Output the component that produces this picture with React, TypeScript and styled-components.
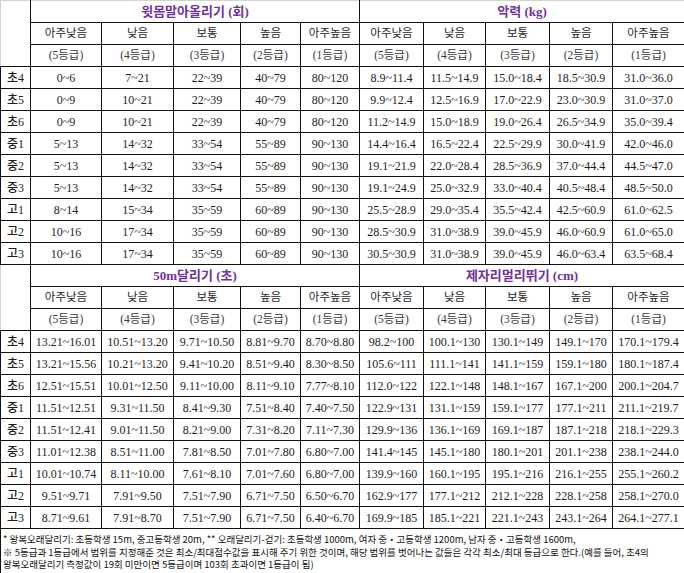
import React from "react";
import styled, { createGlobalStyle } from "styled-components";

const Global = createGlobalStyle`
  html, body { margin: 0; padding: 0; background: #fff; }
  body { font-family: "Liberation Serif", "Noto Sans CJK KR", serif; }
`;

const Table = styled.table`
  border-collapse: collapse;
  table-layout: fixed;
  width: 684px;
  background: #fff;
  color: #1e1e1e;
`;

const Cell = styled.td<{ $kind?: "data" | "label" | "level" | "grade" }>`
  border: 1px solid #111;
  padding: 0;
  height: 21px;
  text-align: center;
  vertical-align: middle;
  white-space: nowrap;
  overflow: hidden;
  font-family: "Liberation Serif", "Noto Sans CJK KR", serif;
  font-size: ${(p) => (p.$kind === "level" || p.$kind === "grade" ? "11.5px" : "12px")};
  color: ${(p) => (p.$kind === "grade" ? "#3a3a3a" : "#1e1e1e")};
  font-weight: ${(p) => (p.$kind === "label" ? 500 : 400)};
  line-height: 1;
`;

const Corner = styled.td`
  border: 1px solid #111;
  border-top-color: #d4d4d4;
  border-left-color: #d4d4d4;
  padding: 0;
`;

const Title = styled.td`
  border: 1px solid #111;
  padding: 0;
  height: 21px;
  text-align: center;
  vertical-align: middle;
  font-family: "Liberation Serif", "Noto Sans CJK KR", serif;
  font-size: 13px;
  font-weight: 600;
  color: #7030a0;
  line-height: 1;
`;

const TopTitle = styled(Title)`
  border-top-color: #d4d4d4;
`;

const Notes = styled.td`
  border: 1px solid #111;
  padding: 4px 1px 2px 2px;
  text-align: left;
  vertical-align: top;
  font-family: "Noto Sans CJK KR", sans-serif;
  font-size: 9.5px;
  line-height: 12.5px;
  color: #111;
  white-space: normal;
  word-break: keep-all;
`;

const widths = [30, 71, 72, 67, 60, 59, 64, 62, 64, 63, 72];
const levels = ["아주낮음", "낮음", "보통", "높음", "아주높음"];
const grades = ["(5등급)", "(4등급)", "(3등급)", "(2등급)", "(1등급)"];
const labels = ["초4", "초5", "초6", "중1", "중2", "중3", "고1", "고2", "고3"];

const top: string[][] = [
  ["0~6", "7~21", "22~39", "40~79", "80~120", "8.9~11.4", "11.5~14.9", "15.0~18.4", "18.5~30.9", "31.0~36.0"],
  ["0~9", "10~21", "22~39", "40~79", "80~120", "9.9~12.4", "12.5~16.9", "17.0~22.9", "23.0~30.9", "31.0~37.0"],
  ["0~9", "10~21", "22~39", "40~79", "80~120", "11.2~14.9", "15.0~18.9", "19.0~26.4", "26.5~34.9", "35.0~39.4"],
  ["5~13", "14~32", "33~54", "55~89", "90~130", "14.4~16.4", "16.5~22.4", "22.5~29.9", "30.0~41.9", "42.0~46.0"],
  ["5~13", "14~32", "33~54", "55~89", "90~130", "19.1~21.9", "22.0~28.4", "28.5~36.9", "37.0~44.4", "44.5~47.0"],
  ["5~13", "14~32", "33~54", "55~89", "90~130", "19.1~24.9", "25.0~32.9", "33.0~40.4", "40.5~48.4", "48.5~50.0"],
  ["8~14", "15~34", "35~59", "60~89", "90~130", "25.5~28.9", "29.0~35.4", "35.5~42.4", "42.5~60.9", "61.0~62.5"],
  ["10~16", "17~34", "35~59", "60~89", "90~130", "28.5~30.9", "31.0~38.9", "39.0~45.9", "46.0~60.9", "61.0~65.0"],
  ["10~16", "17~34", "35~59", "60~89", "90~130", "30.5~30.9", "31.0~38.9", "39.0~45.9", "46.0~63.4", "63.5~68.4"],
];

const bottom: string[][] = [
  ["13.21~16.01", "10.51~13.20", "9.71~10.50", "8.81~9.70", "8.70~8.80", "98.2~100", "100.1~130", "130.1~149", "149.1~170", "170.1~179.4"],
  ["13.21~15.56", "10.21~13.20", "9.41~10.20", "8.51~9.40", "8.30~8.50", "105.6~111", "111.1~141", "141.1~159", "159.1~180", "180.1~187.4"],
  ["12.51~15.51", "10.01~12.50", "9.11~10.00", "8.11~9.10", "7.77~8.10", "112.0~122", "122.1~148", "148.1~167", "167.1~200", "200.1~204.7"],
  ["11.51~12.51", "9.31~11.50", "8.41~9.30", "7.51~8.40", "7.40~7.50", "122.9~131", "131.1~159", "159.1~177", "177.1~211", "211.1~219.7"],
  ["11.51~12.41", "9.01~11.50", "8.21~9.00", "7.31~8.20", "7.11~7.30", "129.9~136", "136.1~169", "169.1~187", "187.1~218", "218.1~229.3"],
  ["11.01~12.38", "8.51~11.00", "7.81~8.50", "7.01~7.80", "6.80~7.00", "141.4~145", "145.1~180", "180.1~201", "201.1~238", "238.1~244.0"],
  ["10.01~10.74", "8.11~10.00", "7.61~8.10", "7.01~7.60", "6.80~7.00", "139.9~160", "160.1~195", "195.1~216", "216.1~255", "255.1~260.2"],
  ["9.51~9.71", "7.91~9.50", "7.51~7.90", "6.71~7.50", "6.50~6.70", "162.9~177", "177.1~212", "212.1~228", "228.1~258", "258.1~270.0"],
  ["8.71~9.61", "7.91~8.70", "7.51~7.90", "6.71~7.50", "6.40~6.70", "169.9~185", "185.1~221", "221.1~243", "243.1~264", "264.1~277.1"],
];

function Section({ titles, rows, first }: { titles: [string, string]; rows: string[][]; first?: boolean }) {
  const T = first ? TopTitle : Title;
  return (
    <>
      <tr>
        <Corner rowSpan={3} />
        <T colSpan={5}>{titles[0]}</T>
        <T colSpan={5}>{titles[1]}</T>
      </tr>
      <tr>
        {[...levels, ...levels].map((l, i) => (
          <Cell key={i} $kind="level">{l}</Cell>
        ))}
      </tr>
      <tr>
        {[...grades, ...grades].map((g, i) => (
          <Cell key={i} $kind="grade">{g}</Cell>
        ))}
      </tr>
      {rows.map((r, ri) => (
        <tr key={ri}>
          <Cell $kind="label">{labels[ri]}</Cell>
          {r.map((v, i) => (
            <Cell key={i} $kind="data">{v}</Cell>
          ))}
        </tr>
      ))}
    </>
  );
}

export default function App() {
  return (
    <>
      <Global />
      <Table>
        <colgroup>
          {widths.map((w, i) => (
            <col key={i} style={{ width: w }} />
          ))}
        </colgroup>
        <tbody>
          <Section first titles={["윗몸말아올리기 (회)", "악력 (kg)"]} rows={top} />
          <Section titles={["50m달리기 (초)", "제자리멀리뛰기 (cm)"]} rows={bottom} />
          <tr>
            <Notes colSpan={11}>
              * 왕복오래달리기: 초등학생 15m, 중고등학생 20m, ** 오래달리기-걷기: 초등학생 1000m, 여자 중・고등학생 1200m, 남자 중・고등학생 1600m,
              <br />※ 5등급과 1등급에서 범위를 지정해준 것은 최소/최대점수값을 표시해 주기 위한 것이며, 해당 범위를 벗어나는 값들은 각각 최소/최대 등급으로 한다.(예를 들어, 초4의 왕복오래달리기 측정값이 19회 미만이면 5등급이며 103회 초과이면 1등급이 됨)
            </Notes>
          </tr>
        </tbody>
      </Table>
    </>
  );
}
